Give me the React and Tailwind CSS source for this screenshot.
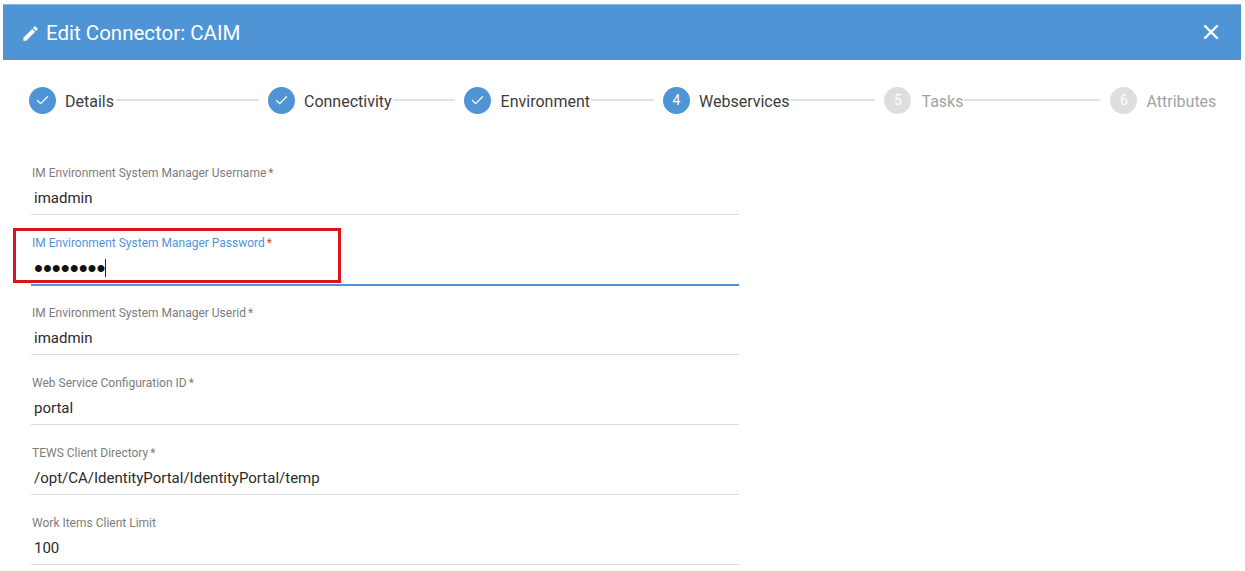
import { Check, X } from 'lucide-react';

const steps = [
  { label: 'Details', done: true, gap: 'ml-[9px]', line: 'ml-[2px] mr-[9px] w-[143px]' },
  { label: 'Connectivity', done: true, gap: 'ml-[9px]', line: 'ml-[1px] mr-[9px] w-[62px]' },
  { label: 'Environment', done: true, gap: 'ml-[10px]', line: 'ml-[1px] mr-[9px] w-[63px]' },
  { label: 'Webservices', num: 4, active: true, gap: 'ml-[9px]', line: 'ml-[1px] mr-[9px] w-[85px]' },
  { label: 'Tasks', num: 5, gap: 'ml-[10px]', line: 'ml-[1px] mr-[10px] w-[136px]' },
  { label: 'Attributes', num: 6, gap: 'ml-[9px]' },
];

const fields = [
  { label: 'IM Environment System Manager Username', value: 'imadmin', required: true },
  { label: 'IM Environment System Manager Password', value: '••••••••', required: true, focused: true },
  { label: 'IM Environment System Manager Userid', value: 'imadmin', required: true },
  { label: 'Web Service Configuration ID', value: 'portal', required: true },
  { label: 'TEWS Client Directory', value: '/opt/CA/IdentityPortal/IdentityPortal/temp', required: true },
  { label: 'Work Items Client Limit', value: '100' },
];

const Step = ({ step }) => {
  const on = step.done || step.active;
  return (
    <div className="flex items-center">
      <div className={`w-[27px] h-[27px] rounded-full flex items-center justify-center text-[14px] text-white ${on ? 'bg-[#4f95d5]' : 'bg-[#dedede]'}`}>
        {step.done ? <Check size={15} strokeWidth={2} /> : step.num}
      </div>
      <span className={`${step.gap} mt-[2px] text-[16px] leading-[20px] ${on ? 'text-[#3c3c3c]' : 'text-[#a3a3a3]'}`}>{step.label}</span>
      {step.line && <div className={`h-[2px] bg-[#e2e2e2] -mt-[1px] ${step.line}`} />}
    </div>
  );
};

const Field = ({ field }) => (
  <div className="h-[70px] flex flex-col">
    <div className={`text-[12px] leading-[16px] mt-[5px] pl-px ${field.focused ? 'text-[#4f95d5]' : 'text-[#7d7d7d]'}`}>
      {field.label}
      {field.required && <span className={`ml-[2px] ${field.focused ? 'text-[#e0442e]' : ''}`}>*</span>}
    </div>
    <div className="h-[20px] text-[15px] leading-[20px] mt-[7px] pl-[3px] text-[#2b2b2b] flex items-center">
      {field.focused
        ? <span className="font-['Liberation_Sans',sans-serif] text-[25.5px] leading-[20px] text-[#111]">{field.value}</span>
        : field.value}
      {field.focused && <span className="w-px h-[18px] bg-[#222]" />}
    </div>
    <div className={`mt-[6px] ${field.focused ? 'h-[2px] bg-[#4f95d5]' : 'h-px bg-[#dcdcdc]'}`} />
  </div>
);

export default function App() {
  return (
    <div className="relative w-[1245px] h-[571px] overflow-hidden bg-white font-['Roboto',sans-serif]">
      <div className="pt-[4px] pl-[3px] pr-[4px]">
        <div className="h-[56px] bg-[#4f95d5] border-t border-[#8ab8e3] flex items-center justify-between pl-[18px] pr-[18px] text-white">
          <div className="flex items-center">
            <svg width="19" height="19" viewBox="0 0 24 24" fill="currentColor" className="mt-[2px]">
              <path d="M3 17.25V21h3.75L17.81 9.94l-3.75-3.75L3 17.25zM20.71 7.04a1 1 0 0 0 0-1.41l-2.34-2.34a1 1 0 0 0-1.41 0l-1.83 1.83 3.75 3.75 1.83-1.83z" />
            </svg>
            <span className="ml-[6px] text-[20.5px] leading-[24px]">Edit Connector: CAIM</span>
          </div>
          <X size={24} strokeWidth={2.4} className="-mt-[2px]" />
        </div>
      </div>

      <div className="flex items-center pl-[29px] mt-[27px] h-[27px]">
        {steps.map(step => <Step key={step.label} step={step} />)}
      </div>

      <div className="w-[708px] ml-[31px] mt-[46px]">
        {fields.map(field => <Field key={field.label} field={field} />)}
      </div>

      <div className="absolute left-[13px] top-[228px] w-[328px] h-[55px] border-[3px] border-[#d9141c]" />
    </div>
  );
}
